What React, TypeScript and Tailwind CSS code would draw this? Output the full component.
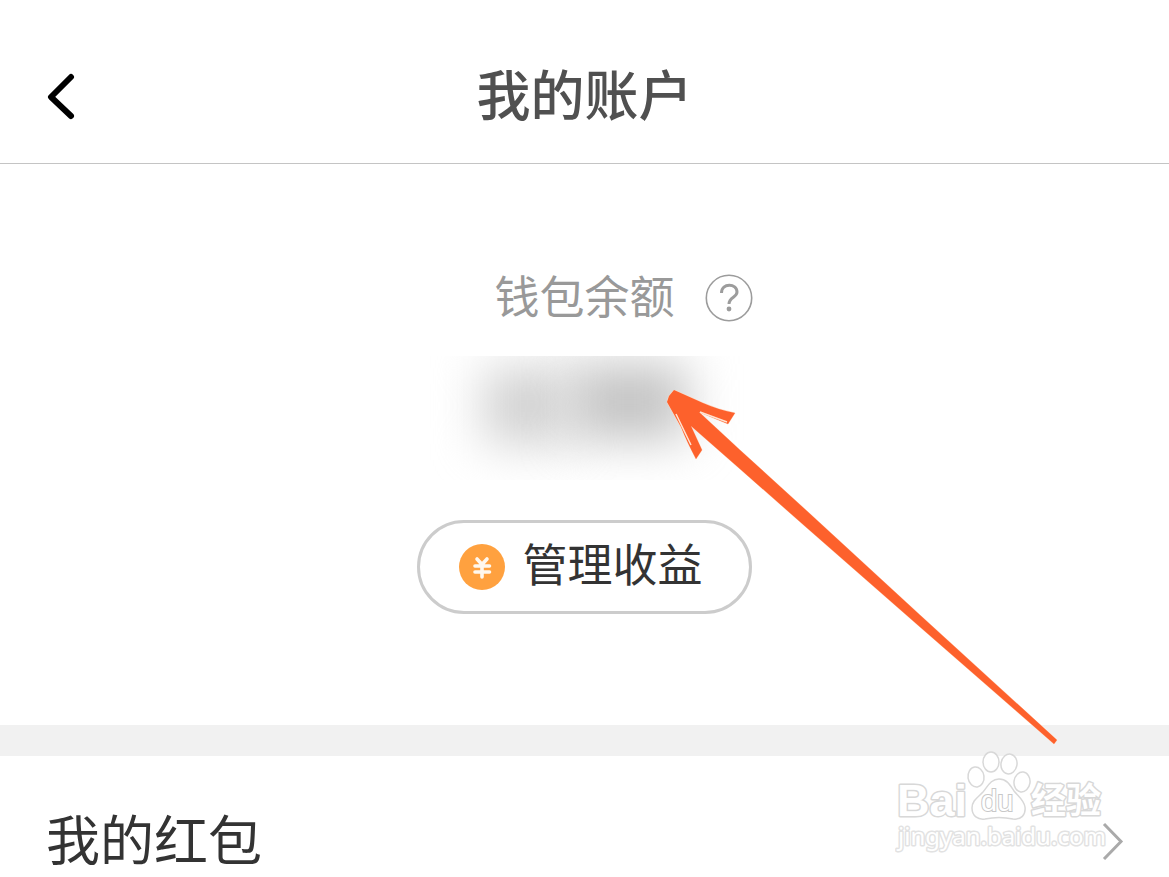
import React from 'react';

function ArrowMark() {
    return (
        <svg
            className="pointer-events-none absolute left-1/2 top-[226px] z-10 ml-[82px]"
            width="392"
            height="356"
            viewBox="0 0 392 356"
            aria-hidden="true"
        >
            <path
                d="M7 0 L36 13 Q52 20 68 23 L61 34 L32 22 L73 60 L140 121 L253 225 L390 350 L387 354 L253 237 L140 138 L73 79 L24 36 L35 60 L29 69 Q20 52 14 37 L0 12 L2 6 Z"
                fill="#fd612c"
                stroke="#ffd9c4"
                strokeWidth="1"
                paintOrder="stroke"
            />
            <path d="M33 22 L60 32 M9 24 L24 55" fill="none" stroke="#ffe3d2" strokeWidth="1.5" />
        </svg>
    );
}

function Watermark() {
    return (
        <svg
            className="pointer-events-none absolute right-[60px] -top-1.5 z-20"
            width="214"
            height="106"
            viewBox="0 0 214 106"
            role="img"
            aria-label="Baidu 经验"
        >
            <g fill="#ffffff" stroke="#d8d8d8" strokeWidth="3" paintOrder="stroke" strokeLinejoin="round">
                <text x="2" y="66" fontSize="45" fontWeight="700" fontFamily="Liberation Sans, Arial, sans-serif">Bai</text>
                <text x="136" y="63" fontSize="35" fontWeight="700" fontFamily="Noto Sans CJK SC, sans-serif">经验</text>
                <text x="3" y="95" fontSize="24" fontFamily="Noto Sans, sans-serif" stroke="#e2e2e2">jingyan.baidu.com</text>
            </g>
            <g fill="#ffffff" stroke="#d8d8d8" strokeWidth="1.5">
                <ellipse cx="96" cy="12" rx="8" ry="10" />
                <ellipse cx="114" cy="14" rx="8" ry="10" transform="rotate(10 114 14)" />
                <ellipse cx="81" cy="27" rx="8" ry="10" transform="rotate(-8 81 27)" />
                <ellipse cx="127" cy="32" rx="8" ry="10" transform="rotate(8 127 32)" />
                <path d="M104 29 C96 29 93 36 88 42 C82 48 77 51 77 58 C77 66 83 70 90 69 C99 67 109 67 118 69 C126 70 131 65 130 57 C129 50 123 46 119 41 C115 35 112 29 104 29 Z" />
            </g>
            <text x="86" y="61" fontSize="29" fill="#ffffff" stroke="#c8c8c8" strokeWidth="2" paintOrder="stroke" fontFamily="Liberation Sans, Arial, sans-serif">du</text>
        </svg>
    );
}

function Header() {
    return (
        <header className="grid grid-cols-[1fr_auto_1fr] items-center border-b border-[#c4c4c4] px-[46px] pt-16 pb-[35px]">
            <button type="button" aria-label="返回" className="w-8">
                <svg width="32" height="48" viewBox="0 0 32 48" fill="none" stroke="#000000" strokeWidth="6" strokeLinecap="round" strokeLinejoin="round">
                    <path d="M25 5 L5 25 L25 44" />
                </svg>
            </button>
            <h1 className="pb-1.5 text-[54px] leading-[58px] font-medium text-[#505050]">我的账户</h1>
        </header>
    );
}

function Balance() {
    return (
        <section className="relative flex flex-col items-center pt-[110px] pb-[111px]">
            <div className="grid w-full grid-cols-[1fr_auto_1fr] items-center">
                <h2 className="col-start-2 pb-1.5 text-[45px] leading-[42px] text-[#999999]">钱包余额</h2>
                <button type="button" aria-label="余额说明" className="ml-[30px] w-12">
                    <svg width="48" height="48" viewBox="0 0 48 48" fill="none" stroke="#9c9c9c">
                        <circle cx="24" cy="24" r="22.7" strokeWidth="1.6" />
                        <path d="M16.5 19 C16.5 8.5 32 9 32 18 C32 23.5 24 23 24 30" strokeWidth="3" />
                        <circle cx="24" cy="35" r="2.4" fill="#9c9c9c" stroke="none" />
                    </svg>
                </button>
            </div>

            {/* Saldo oculto */}
            <div className="mt-[34px] flex h-[124px] w-[320px] items-start justify-center overflow-hidden" aria-label="余额已隐藏">
                <div className="mt-3 h-[76px] w-[88px] bg-[#d2d2d2] blur-[24px]" />
                <div className="mt-2 h-[76px] w-[116px] bg-[#c4c4c4] blur-[24px]" />
            </div>

            <button type="button" className="mt-10 flex items-center gap-[17px] rounded-full border-[3px] border-[#cccccc] bg-white py-5 pr-[46px] pl-[39px]">
                <svg width="46" height="46" viewBox="0 0 46 46" aria-hidden="true">
                    <circle cx="23" cy="23" r="23" fill="#ffa13f" />
                    <path d="M18 15 L23 20.5 L28 15 M16 22 H30.5 M16 28 H30.5 M23 20.5 V33" fill="none" stroke="#fff8ee" strokeWidth="3.6" strokeLinecap="round" />
                </svg>
                <span className="pb-2 text-[45px] leading-10 text-[#333333]">管理收益</span>
            </button>

            <ArrowMark />
        </section>
    );
}

export default function App() {
    return (
        <div className="bg-white font-['Noto_Sans_CJK_SC',sans-serif]">
            <Header />
            <main>
                <Balance />
                <div className="h-[31px] bg-[#f1f1f1]" />
                <section className="relative">
                    <a href="#hongbao" className="flex items-center justify-between pt-[53px] pr-[45px] pb-1 pl-[46px]">
                        <span className="pb-1.5 text-[54px] leading-[58px] text-[#333333]">我的红包</span>
                        <svg width="22" height="38" viewBox="0 0 22 38" fill="none" stroke="#aaaaaa" strokeWidth="3" aria-hidden="true">
                            <path d="M2 2 L19 19.5 L2 37" />
                        </svg>
                    </a>
                    <Watermark />
                </section>
            </main>
        </div>
    );
}
